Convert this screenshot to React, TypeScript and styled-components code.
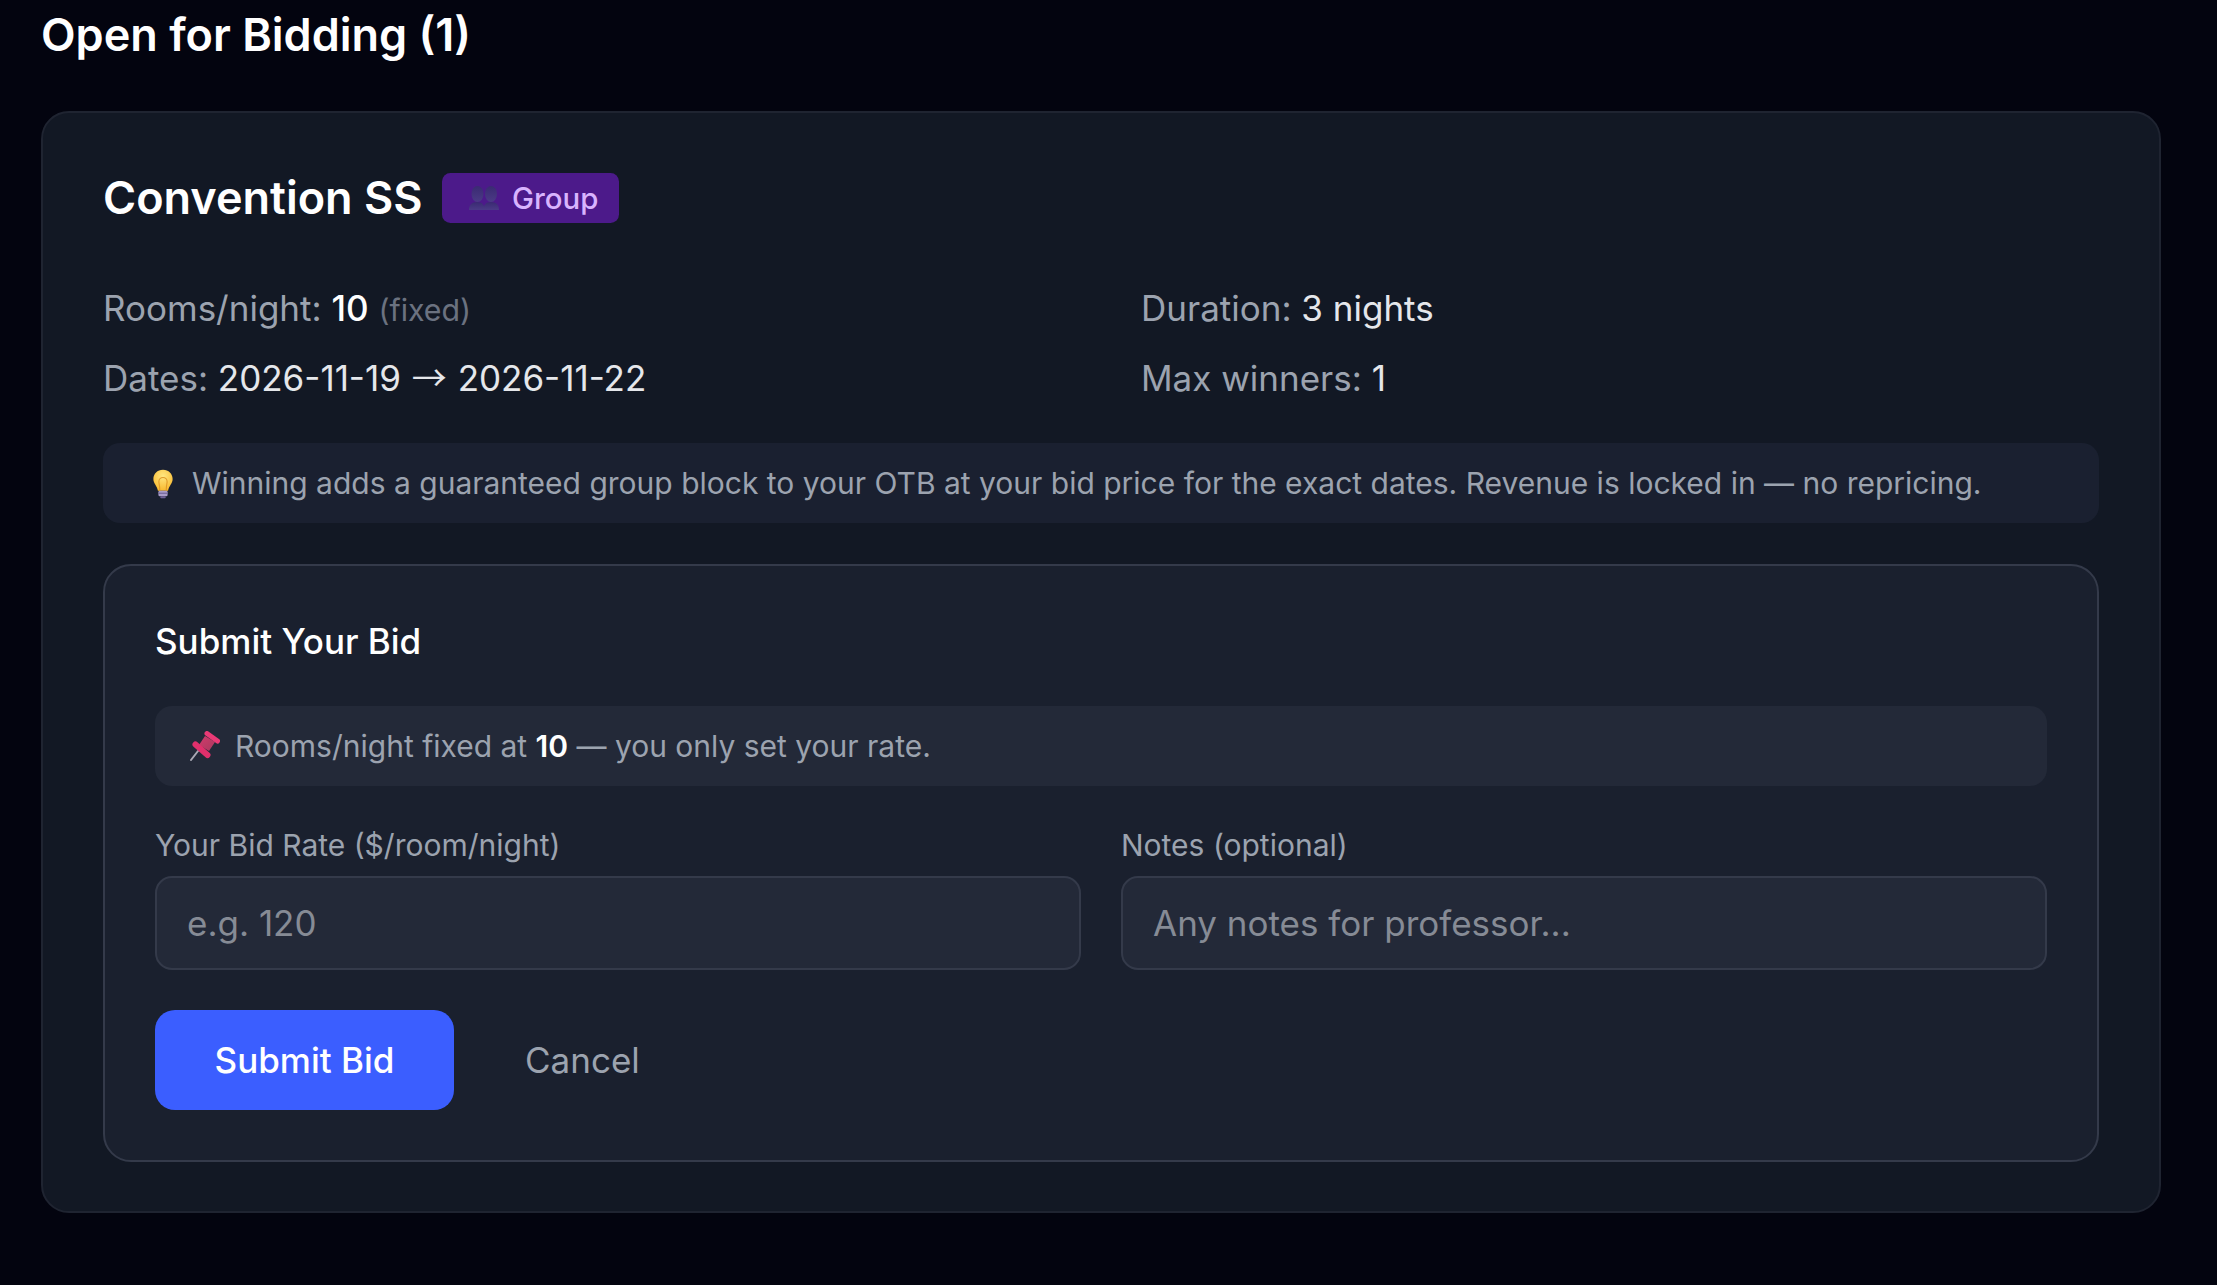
import React from "react";
import styled, { createGlobalStyle } from "styled-components";

const GlobalStyle = createGlobalStyle`
  * { box-sizing: border-box; }
  html, body { margin: 0; padding: 0; background: #03040f; }
  body { font-family: Inter, "Noto Sans", sans-serif; }
`;

const Page = styled.div`
  min-height: 100vh;
  padding: 10px 56px 0 41px;
  background: #03040f;
  color: #fff;
`;

const PageTitle = styled.h2`
  margin: 0 0 51px;
  font-size: 45px;
  line-height: 50px;
  font-weight: 600;
`;

const Card = styled.section`
  background: #121824;
  border: 2px solid #1f2431;
  border-radius: 28px;
  padding: 60px 60px 49px;
`;

const TitleRow = styled.div`
  display: flex;
  align-items: center;
  gap: 19.5px;
  margin-bottom: 50px;
`;

const CardTitle = styled.h3`
  margin: 0;
  font-size: 45px;
  line-height: 48px;
  font-weight: 600;
`;

const Badge = styled.span`
  display: inline-flex;
  align-items: center;
  gap: 13px;
  height: 50px;
  padding: 0 21px 0 27px;
  border-radius: 8.5px;
  background: #4c1a8a;
  color: #d8b4fe;
  font-size: 29.4px;
  font-weight: 500;
`;

const MetaGrid = styled.div`
  display: grid;
  grid-template-columns: 1fr 1fr;
  column-gap: 80px;
  margin-bottom: 30px;
`;

const MetaItem = styled.div`
  height: 70px;
  line-height: 70px;
  font-size: 35px;
  color: #9ca3af;
`;

const MetaValue = styled.span<{ $bright?: boolean }>`
  color: ${(p) => (p.$bright ? "#fff" : "#e5e7eb")};
  font-weight: ${(p) => (p.$bright ? 500 : 400)};
`;

const MetaHint = styled.span`
  color: #6b7280;
  font-size: 30.3px;
`;

const Arrow = styled.span`
  font-family: "Noto Sans CJK SC", sans-serif;
  line-height: 1;
  margin: 0 1px;
`;

const Note = styled.div<{ $raised?: boolean }>`
  display: flex;
  align-items: center;
  height: 80px;
  padding: 0 34px;
  border-radius: 17px;
  background: ${(p) => (p.$raised ? "#232938" : "#1a2030")};
  color: #9ca3af;
  font-size: 30px;
`;

const NoteIcon = styled.svg<{ $before?: number; $after: number }>`
  flex: none;
  margin-left: ${(p) => p.$before ?? 0}px;
  margin-right: ${(p) => p.$after}px;
`;

const Strong = styled.strong`
  color: #fff;
  font-weight: 600;
  margin: 0 0.28em;
`;

const BidBox = styled.form`
  margin-top: 41px;
  padding: 51px 50px 50px;
  background: #1a202e;
  border: 2px solid #343a4a;
  border-radius: 28px;
`;

const BidTitle = styled.h4`
  margin: 0 0 41px;
  font-size: 35px;
  line-height: 48px;
  font-weight: 500;
`;

const Fields = styled.div`
  display: grid;
  grid-template-columns: 1fr 1fr;
  gap: 40px;
  margin-top: 41px;
`;

const Field = styled.label`
  display: flex;
  flex-direction: column;
  gap: 13px;
  color: #9ca3af;
  font-size: 30px;
  line-height: 36px;
`;

const Input = styled.input`
  height: 94px;
  padding: 0 30px;
  background: #232938;
  border: 2px solid #343a4a;
  border-radius: 17px;
  color: #fff;
  font-family: inherit;
  font-size: 35px;
  outline: none;
  &::placeholder { color: #868b95; opacity: 1; }
`;

const Actions = styled.div`
  display: flex;
  align-items: center;
  gap: 11px;
  margin-top: 40px;
`;

const SubmitButton = styled.button`
  width: 299px;
  height: 100px;
  border: 0;
  border-radius: 20px;
  background: #3b5eff;
  color: #fff;
  font-family: inherit;
  font-size: 35px;
  font-weight: 500;
`;

const CancelButton = styled.button`
  height: 100px;
  padding: 0 60px;
  border: 0;
  background: transparent;
  color: #9ca3af;
  font-family: inherit;
  font-size: 35px;
`;

const Busts = () => (
  <svg width="30" height="24" viewBox="0 0 30 24" aria-hidden="true">
    <defs>
      <linearGradient id="bustFill" x1="0" y1="0" x2="0" y2="1">
        <stop offset="0" stopColor="#3a2a72" />
        <stop offset="1" stopColor="#4b3a86" />
      </linearGradient>
    </defs>
    <g fill="url(#bustFill)">
      <ellipse cx="22" cy="8" rx="6" ry="8" />
      <path d="M14.500 24c0-5 2-8 7.500-8s8 3 8 8z" />
      <ellipse cx="8.500" cy="8" rx="6" ry="8" />
      <path d="M0 24c0-5 2.500-8 8-8s7.500 3 7.500 8z" />
    </g>
  </svg>
);

const Bulb = () => (
  <NoteIcon $before={15} $after={18} width="22" height="31" viewBox="0 0 24 32" aria-hidden="true">
    <defs>
      <radialGradient id="bulbGlow" cx="0.5" cy="0.3" r="0.7">
        <stop offset="0" stopColor="#ffe680" />
        <stop offset="1" stopColor="#f9b92e" />
      </radialGradient>
    </defs>
    <path d="M12 1C5.800 1 1.500 5.600 1.500 11c0 5 4.200 7.600 5 13h11c.8-5.400 5-8 5-13C22.500 5.600 18.200 1 12 1z" fill="url(#bulbGlow)" />
    <path d="M8.500 24c0-6-1-8-1-10a4.500 4.500 0 0 1 9 0c0 2-1 4-1 10" fill="none" stroke="#e09a2a" strokeWidth="1.200" />
    <rect x="7" y="24" width="10" height="6" rx="1.500" fill="#a89cc8" />
    <rect x="7" y="26" width="10" height="1.200" fill="#6f6296" />
    <rect x="9" y="30" width="6" height="2" rx="1" fill="#6f6296" />
  </NoteIcon>
);

const Pin = () => (
  <NoteIcon $before={1} $after={15} width="30" height="30" viewBox="0 0 30 30" aria-hidden="true">
    <defs>
      <linearGradient id="pinWaist" x1="0" y1="0" x2="1" y2="1">
        <stop offset="0" stopColor="#d23a6c" />
        <stop offset="1" stopColor="#a83a5e" />
      </linearGradient>
    </defs>
    <path d="M1 29 8 20" stroke="#a8a8b4" strokeWidth="2" strokeLinecap="round" />
    <path d="M15 5 25 11 19 20 9 14z" fill="url(#pinWaist)" />
    <path d="M17 2.500 27.500 10" stroke="#ea3a76" strokeWidth="5" strokeLinecap="round" />
    <path d="M5.500 13.500 17.500 24" stroke="#e0306c" strokeWidth="6" strokeLinecap="round" />
  </NoteIcon>
);

export default function App() {
  return (
    <Page>
      <GlobalStyle />
      <PageTitle>Open for Bidding (1)</PageTitle>
      <Card>
        <TitleRow>
          <CardTitle>Convention SS</CardTitle>
          <Badge>
            <Busts />
            Group
          </Badge>
        </TitleRow>
        <MetaGrid>
          <MetaItem>
            Rooms/night: <MetaValue $bright>10</MetaValue> <MetaHint>(fixed)</MetaHint>
          </MetaItem>
          <MetaItem>
            Duration: <MetaValue>3 nights</MetaValue>
          </MetaItem>
          <MetaItem>
            Dates: <MetaValue>2026-11-19 <Arrow>→</Arrow> 2026-11-22</MetaValue>
          </MetaItem>
          <MetaItem>
            Max winners: <MetaValue>1</MetaValue>
          </MetaItem>
        </MetaGrid>
        <Note>
          <Bulb />
          Winning adds a guaranteed group block to your OTB at your bid price for the exact dates. Revenue is locked in — no repricing.
        </Note>
        <BidBox onSubmit={(e) => e.preventDefault()}>
          <BidTitle>Submit Your Bid</BidTitle>
          <Note $raised>
            <Pin />
            Rooms/night fixed at<Strong>10</Strong>— you only set your rate.
          </Note>
          <Fields>
            <Field>
              Your Bid Rate ($/room/night)
              <Input placeholder="e.g. 120" />
            </Field>
            <Field>
              Notes (optional)
              <Input placeholder="Any notes for professor..." />
            </Field>
          </Fields>
          <Actions>
            <SubmitButton type="submit">Submit Bid</SubmitButton>
            <CancelButton type="button">Cancel</CancelButton>
          </Actions>
        </BidBox>
      </Card>
    </Page>
  );
}
